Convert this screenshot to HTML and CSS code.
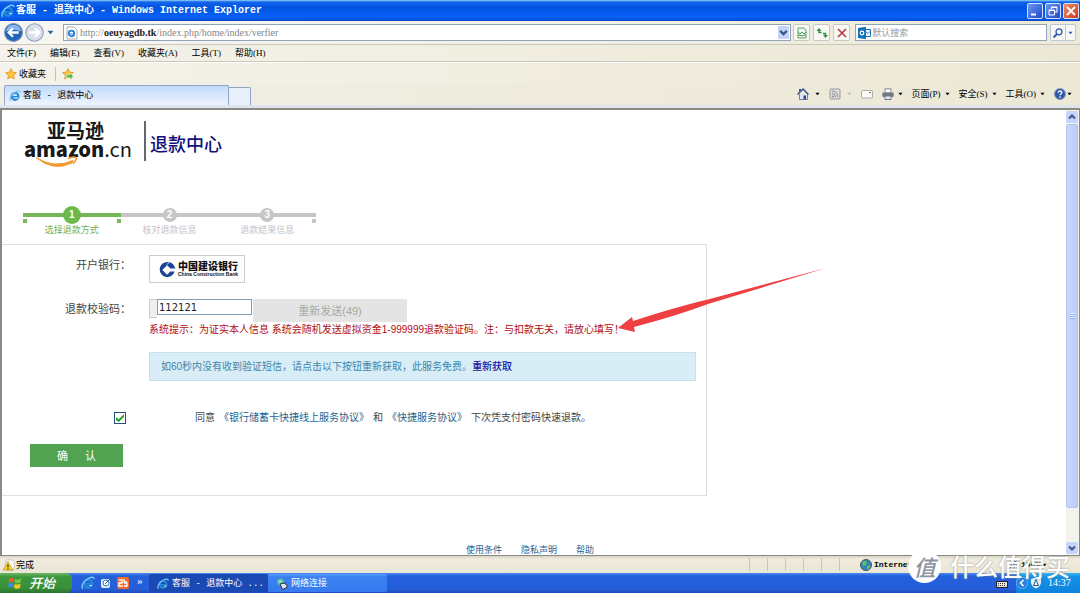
FILE: index.html
```
<!DOCTYPE html>
<html lang="zh-CN">
<head>
<meta charset="utf-8">
<title>客服 - 退款中心</title>
<link rel="stylesheet" href="styles.css">
</head>
<body>
<svg class="defs" aria-hidden="true">
  <defs>
    <symbol id="ie" viewBox="0 0 16 16">
      <circle cx="8" cy="8.500" r="4.600" fill="none" stroke="#2588d8" stroke-width="2.800"/>
      <path d="M4 9h8.500" stroke="#2588d8" stroke-width="2"/>
      <path d="M13 10.200h-3.200l-1 1h3.700z" fill="#fff"/>
      <path d="M2 14.500C-.5 12 3 5.500 8 3c4-2.200 7-2.200 6.800.6" fill="none" stroke="#7cc6f6" stroke-width="1.600"/>
    </symbol>
    <symbol id="star" viewBox="0 0 14 14">
      <path d="M7 .8l1.900 4 4.400.6-3.200 3 .8 4.400L7 10.700l-3.900 2.100.8-4.400-3.200-3 4.400-.6z" fill="#fdc63a" stroke="#d98a14" stroke-width=".8"/>
    </symbol>
    <symbol id="down" viewBox="0 0 6 4"><path d="M.5.500h5L3 3.500z" fill="currentColor"/></symbol>
    <symbol id="chev" viewBox="0 0 10 10"><path d="M2 3.500l3 3 3-3" fill="none" stroke="#3d5487" stroke-width="2"/></symbol>
  </defs>
</svg>

<header class="titlebar">
  <svg class="i14"><use href="#ie"/></svg>
  <h1 class="title">客服 - 退款中心 - Windows Internet Explorer</h1>
  <div class="winbtns">
    <button class="winbtn" aria-label="最小化"><svg viewBox="0 0 14 14"><path d="M3 10.500h5" stroke="#fff" stroke-width="2"/></svg></button>
    <button class="winbtn" aria-label="还原"><svg viewBox="0 0 14 14"><path d="M5.500 5V3h5.500v5H9M3 6h5.500v5H3zM3 6.500h5.500M5.500 3.500H11" fill="none" stroke="#fff"/></svg></button>
    <button class="winbtn close" aria-label="关闭"><svg viewBox="0 0 14 14"><path d="M3 3l8 8M11 3l-8 8" stroke="#fff" stroke-width="1.800"/></svg></button>
  </div>
</header>

<div class="address">
  <button class="nav" aria-label="后退"><svg viewBox="0 0 18 18"><circle cx="9" cy="9" r="8.500" fill="#2264b8" stroke="#7c93b5"/><path d="M2 8a7 6.500 0 0 1 14 0q-7-3-14 0" fill="#86b6ea"/><path d="M14 9H5M8.500 5L4.500 9l4 4" fill="none" stroke="#fff" stroke-width="2.200"/></svg></button>
  <button class="nav" aria-label="前进"><svg viewBox="0 0 18 18"><circle cx="9" cy="9" r="8.300" fill="#d9dfe9" stroke="#8b9bb5"/><path d="M4 9h9M9.500 5l4 4-4 4" fill="none" stroke="#fff" stroke-width="2.200"/></svg></button>
  <button class="plain blue" aria-label="历史"><svg class="arrow"><use href="#down"/></svg></button>
  <div class="urlbox">
    <svg class="i14" viewBox="0 0 14 14"><path d="M2 1h7l3 3v9H2z" fill="#fff" stroke="#999" stroke-width=".8"/><circle cx="6.500" cy="7.500" r="2.800" fill="none" stroke="#2a7fd0" stroke-width="1.800"/><path d="M4 8h5" stroke="#2a7fd0"/></svg>
    <span class="url">http://<b>oeuyagdb.tk</b>/index.php/home/index/verfier</span>
    <button class="drop" aria-label="展开"><svg viewBox="0 0 10 10"><use href="#chev"/></svg></button>
  </div>
  <button class="tool" aria-label="兼容性视图"><svg viewBox="0 0 12 12"><path d="M2 1h6l2 2v8H2z" fill="#eef8ee" stroke="#61a068"/><path d="M2 5l2 2 2-2 2 2 2-2M2 9l2-1 2 1 2-1 2 1" fill="none" stroke="#4c9455"/></svg></button>
  <button class="tool" aria-label="刷新"><svg viewBox="0 0 12 12"><path d="M5.500 5.500H3V3.500M7 6.500h2.500V9" fill="none" stroke="#2f8e3c" stroke-width="1.400"/><path d="M.5 4L3 1l2.500 3zM7 8l2.500 3L12 8z" fill="#2f8e3c"/></svg></button>
  <button class="tool" aria-label="停止"><svg viewBox="0 0 12 12"><path d="M2 2l8 8M10 2l-8 8" stroke="#b8323a" stroke-width="1.500"/></svg></button>
  <label class="search">
    <svg class="i14" viewBox="0 0 14 14"><path d="M8 3.500h5.500v7H8z" fill="#fff" stroke="#1172b8"/><path d="M8 5l3 2.500L13.500 5" fill="none" stroke="#1172b8"/><path d="M1 2l8-1.300v12.600L1 12z" fill="#1172b8"/><circle cx="5" cy="7" r="1.800" fill="none" stroke="#fff" stroke-width="1.200"/></svg>
    <input type="text" placeholder="默认搜索" aria-label="搜索">
  </label>
  <div class="searchbtns">
    <button class="go" aria-label="搜索"><svg viewBox="0 0 12 12"><circle cx="7" cy="4.800" r="3" fill="#eef5ff" stroke="#2e5cab" stroke-width="1.300"/><path d="M5 7l-3.500 3.500" stroke="#2e5cab" stroke-width="1.800"/></svg></button>
    <button class="more" aria-label="搜索选项"><svg class="arrow"><use href="#down"/></svg></button>
  </div>
</div>

<nav class="menubar">
  <button>文件(F)</button><button>编辑(E)</button><button>查看(V)</button><button>收藏夹(A)</button><button>工具(T)</button><button>帮助(H)</button>
</nav>

<div class="favbar">
  <button class="fav"><svg class="i12"><use href="#star"/></svg>收藏夹</button>
  <button class="addfav" aria-label="添加到收藏夹栏"><svg class="i12" viewBox="0 0 14 14"><use href="#star"/><path d="M5 8h4V6l4.500 3.500L9 13v-2H5z" fill="#4db848" stroke="#fff" stroke-width=".6"/></svg></button>
</div>

<div class="tabrow">
  <div class="tabs">
    <button class="tab"><svg class="i12"><use href="#ie"/></svg>客服 - 退款中心</button>
    <button class="newtab" aria-label="新选项卡"></button>
  </div>
  <div class="commands">
    <button class="cmd" aria-label="主页"><svg class="i12" viewBox="0 0 12 12"><path d="M2.500 6v5.500h8V6" fill="#dbe7f5" stroke="#6f86ab"/><path d="M.5 6.500L6 1l5.500 5.500" fill="none" stroke="#41598d" stroke-width="1.500"/><path d="M2 1h2v3H2z" fill="#41598d"/><path d="M6.500 7.500H9v4H6.500z" fill="#324a80"/></svg><svg class="arrow"><use href="#down"/></svg></button>
    <button class="cmd off" aria-label="源"><svg class="i12" viewBox="0 0 12 12"><rect x="1" y="1" width="10" height="10" rx="1" fill="#ddd" stroke="#999"/><path d="M3 5.500a3.500 3.500 0 0 1 3.500 3.500M3 3a6 6 0 0 1 6 6" fill="none" stroke="#888"/><circle cx="3.800" cy="8.500" r="1" fill="#888"/></svg><svg class="arrow"><use href="#down"/></svg></button>
    <button class="cmd" aria-label="阅读邮件"><svg class="i12" viewBox="0 0 12 12"><rect x=".5" y="2.500" width="11" height="7.500" rx="1" fill="#fbfbf8" stroke="#aaa"/><path d="M8 4.500h2" stroke="#b55"/></svg></button>
    <button class="cmd" aria-label="打印"><svg class="i12" viewBox="0 0 12 12"><path d="M3 .8h6V5H3z" fill="#fff" stroke="#889"/><rect x=".3" y="4.500" width="11.400" height="4.500" rx="1" fill="#727780"/><path d="M3 8h6v3.500H3z" fill="#dce8fa" stroke="#778"/></svg><svg class="arrow"><use href="#down"/></svg></button>
    <button class="cmd">页面(P)<svg class="arrow"><use href="#down"/></svg></button>
    <button class="cmd">安全(S)<svg class="arrow"><use href="#down"/></svg></button>
    <button class="cmd">工具(O)<svg class="arrow"><use href="#down"/></svg></button>
    <button class="cmd help" aria-label="帮助"><svg class="i12" viewBox="0 0 12 12"><circle cx="6" cy="6" r="5.500" fill="#2e58a8" stroke="#8b9cc0"/><path d="M4.200 4.800C4.200 2.400 8 2.500 7.900 4.600 7.800 5.800 6 5.800 6 7.300M6 8.300v1.400" fill="none" stroke="#fff" stroke-width="1.300"/></svg><svg class="arrow"><use href="#down"/></svg></button>
  </div>
</div>

<div class="viewport">
  <main class="page">
    <div class="brand">
      <div class="logo">
        <span class="logo-cn">亚马逊</span>
        <span class="logo-en"><b>amazon</b>.cn</span>
        <svg class="smile" viewBox="0 0 44 11"><path d="M1 1.500Q19 13 38 4.500L37 7q-19 9-36-5.500z" fill="#f19a2e" stroke="#f19a2e"/><path d="M33 2.500q7-2.500 8-.8t-3 6" fill="none" stroke="#f19a2e" stroke-width="1.600"/></svg>
      </div>
      <h2 class="center">退款中心</h2>
    </div>

    <ol class="steps">
      <li class="step active"><span class="num">1</span><span class="name">选择退款方式</span></li>
      <li class="step"><span class="num">2</span><span class="name">核对退款信息</span></li>
      <li class="step"><span class="num">3</span><span class="name">退款结果信息</span></li>
    </ol>

    <form class="panel">
      <div class="row bankrow">
        <span class="label">开户银行：</span>
        <div class="bank">
          <svg class="ccb" viewBox="0 0 18 18"><path d="M9 1a8 8 0 1 0 7.500 10H12l-3.500 3.500-5-5 5-5L12 8h5.500L15 3.500Q13 1 9 1z" fill="#1a4597"/><path d="M8 4l3-2.500" stroke="#fff" stroke-width=".8"/><path d="M8.500 7L11 9.500 8.500 12 6 9.500z" fill="#fff"/></svg>
          <span class="bankname"><b>中国建设银行</b><small>China Construction Bank</small></span>
        </div>
      </div>
      <div class="row coderow">
        <label class="label" for="code">退款校验码：</label>
        <div>
          <div class="codeline">
            <span class="addon"></span>
            <input class="code" id="code" type="text" value="112121">
            <button class="resend" type="button" disabled>重新发送(49)</button>
          </div>
          <p class="hint">系统提示：为证实本人信息 系统会随机发送虚拟资金1-999999退款验证码。注：与扣款无关，请放心填写！</p>
        </div>
      </div>
      <p class="alert">如60秒内没有收到验证短信，请点击以下按钮重新获取，此服务免费。<a href="#">重新获取</a></p>
      <div class="agree">
        <input type="checkbox" id="agree" class="check" checked>
        <label for="agree">同意<a href="#">《银行储蓄卡快捷线上服务协议》</a>和<a href="#">《快捷服务协议》</a>下次凭支付密码快速退款。</label>
      </div>
      <button class="submit" type="button"><span>确</span><span>认</span></button>
    </form>

    <footer class="links"><a href="#">使用条件</a><a href="#">隐私声明</a><a href="#">帮助</a></footer>

    <svg class="pointer" viewBox="0 0 210 64"><path d="M2 60L16 49l1 4Q60 39 90 32L210 0 92 36Q60 48 18 59l1 5z" fill="#ee4040"/></svg>
  </main>
  <div class="scroll">
    <button class="sbtn" aria-label="向上滚动"><svg class="flip" viewBox="0 0 10 10"><use href="#chev"/></svg></button>
    <div class="thumb"><i></i></div>
    <div class="track"></div>
    <button class="sbtn" aria-label="向下滚动"><svg viewBox="0 0 10 10"><use href="#chev"/></svg></button>
  </div>
</div>

<div class="status">
  <svg class="i12" viewBox="0 0 12 12"><path d="M3 1h7l1 1v9H3z" fill="#fff" stroke="#aaa" stroke-width=".6"/><path d="M5 2.500l5 8.500H.3z" fill="#fbd535" stroke="#a88300" stroke-width=".6"/><path d="M5 5.500v3M5 9.300v1" stroke="#000"/></svg>
  <span class="done">完成</span>
  <i class="cell"></i><i class="cell"></i><i class="cell"></i><i class="cell"></i><i class="cell"></i><i class="cell"></i>
  <div class="zone"><svg class="i12" viewBox="0 0 12 12"><circle cx="6" cy="6" r="5.500" fill="#3183b9" stroke="#456"/><path d="M2 3q3-2 5 0L6 6 3 7zM7 7l3-1v3L7 11z" fill="#62bd68"/></svg>Internet</div>
  <div class="zoom"><svg class="i12" viewBox="0 0 12 12"><circle cx="7" cy="5" r="3" fill="#e8f2ff" stroke="#456aa8"/><path d="M5 7l-4 4M5.500 5h3M7 3.500v3" stroke="#456aa8"/></svg>100%<svg class="arrow"><use href="#down"/></svg></div>
</div>

<div class="taskbar">
  <button class="start"><svg class="i14" viewBox="0 0 14 14"><path d="M1 3q3-2 5-.5L5.500 6.500Q3.500 5 .5 6.500z" fill="#f0592a"/><path d="M7 3q3 1.500 6-.5L12.500 6.500q-3 1.500-6 .3z" fill="#80c342"/><path d="M.5 7.500q3-1.500 5 0L5 11.500q-2-1.500-5 0z" fill="#3b8de8"/><path d="M6.500 8q3 1.200 6-.3L12 12q-3 1.500-6-.3z" fill="#fbc81e"/></svg>开始</button>
  <div class="quick">
    <svg class="i14"><use href="#ie"/></svg>
    <svg class="i12" viewBox="0 0 12 12"><rect x="1" y="2" width="9" height="9" rx="2" fill="#e3eefa"/><circle cx="6" cy="6" r="3" fill="#fff" stroke="#2a7cc5"/><path d="M5 7l6-6" stroke="#3a5f91"/></svg>
    <svg class="i12" viewBox="0 0 12 12"><rect width="12" height="12" rx="2" fill="#f26b2b"/><path d="M2 3h3v3H2v3h4M7 2v3h3M7 6h3v3H7" fill="none" stroke="#fff" stroke-width="1.300"/></svg>
    <span class="raquo">»</span>
  </div>
  <button class="task on"><svg class="i12"><use href="#ie"/></svg>客服 - 退款中心 ...</button>
  <button class="task"><svg class="i12" viewBox="0 0 12 12"><circle cx="4.500" cy="4" r="3.500" fill="#51bdb1"/><path d="M4 6l5-1 2.500 4-5 2.500z" fill="#dde8ef" stroke="#334"/><path d="M2 3l3-1 1 2-2 1z" fill="#a5e8a0"/></svg>网络连接</button>
  <svg class="kbd" viewBox="0 0 12 10"><rect x=".5" y="3.500" width="11" height="6" fill="#ece9dc" stroke="#222"/><path d="M2 5.500h8M2 7.500h8" stroke="#333" stroke-dasharray="1 1"/></svg>
  <div class="tray">
    <svg class="i12" viewBox="0 0 12 12"><circle cx="6" cy="6" r="5.800" fill="#2d83df" stroke="#8dc2f5" stroke-width=".6"/><path d="M7.500 3l-3 3 3 3" fill="none" stroke="#fff" stroke-width="1.500"/></svg>
    <svg class="i12" viewBox="0 0 12 12"><path d="M1 2l5-1.500L11 2v4q-1 4-5 5.500Q2 10 1 6z" fill="#e7f0f6"/><path d="M6 2.500l2.500 6h-5z" fill="none" stroke="#2a587b"/></svg>
    <time>14:37</time>
  </div>
</div>

<div class="watermark"><span class="seal">值</span><span>什么值得买</span></div>
</body>
</html>
```
FILE: styles.css
```
* { box-sizing: border-box; }
html, body { height: 100%; }
body {
  margin: 0;
  display: flex;
  flex-direction: column;
  position: relative;
  overflow: hidden;
  background: #ece9d8;
  color: #000;
  font: 9px/14px "Liberation Serif", "Noto Sans CJK SC", sans-serif;
}
button, input { font: inherit; color: inherit; margin: 0; padding: 0; border: 0; background: none; }
button { display: flex; align-items: center; white-space: nowrap; }
svg { display: block; flex: none; }
a { text-decoration: none; color: #1c638f; }
p, h1, h2, ol { margin: 0; padding: 0; }
.defs { position: absolute; width: 0; height: 0; }
.i14 { width: 14px; height: 14px; }
.i12 { width: 12px; height: 12px; }
.arrow { width: 5px; height: 4px; }

.titlebar {
  flex: none;
  display: flex;
  align-items: center;
  height: 21px;
  padding: 0 1px;
  background: linear-gradient(#8fd3f8 0, #1464ea 2px, #0053e1 8px, #0862f6 17px, #0447cc);
}
.title {
  flex: 1;
  margin-left: 1px;
  color: #fff;
  font: bold 10px/16px "Liberation Mono", "Noto Sans CJK SC", monospace;
}
.winbtns { display: flex; gap: 2px; }
.winbtn { width: 16px; height: 16px; border: 1px solid #d5e2fb; border-radius: 2px; background: linear-gradient(135deg, #6d96ef, #1c49cf); }
.winbtn.close { background: linear-gradient(135deg, #f08d6c, #cc3a17); }

.address {
  flex: none;
  display: flex;
  align-items: center;
  height: 24px;
  padding: 0 4px;
  background: linear-gradient(90deg, #f7f6f2, #edeada);
  border-bottom: 1px solid #cbc8b8;
}
.nav { width: 20px; }
.nav + .nav { margin-left: 1px; }
.nav svg { width: 19px; height: 19px; }
.blue { color: #2b6494; margin: 0 9px 0 2px; }
.blue .arrow { width: 7px; height: 5px; }
.urlbox, .search { display: flex; align-items: center; height: 17px; background: #fff; border: 1px solid #92a5b8; }
.urlbox { flex: 730; padding-left: 1px; }
.url { flex: 1; margin-left: 1px; color: #858585; font-size: 10px; }
.url b { color: #222; }
.drop { width: 11px; height: 13px; margin-right: 1px; background: #c3d3fb; border-radius: 1px; }
.tool { justify-content: center; width: 17px; height: 17px; margin-left: 3px; border: 1px solid #c9c9c0; border-radius: 2px; background: #f9f8f4; }
.urlbox + .tool { margin-left: 2px; }
.tool svg { width: 12px; height: 12px; }
.search { flex: 190; margin-left: 5px; padding-left: 1px; }
.search input { flex: 1; min-width: 0; margin-left: 1px; outline: 0; }
.search input::placeholder { color: #999; opacity: 1; }
.searchbtns { display: flex; width: 26px; height: 17px; margin-left: 3px; border: 1px solid #bcc6d4; border-radius: 2px; background: #f9f8f4; }
.go { width: 15px; justify-content: center; border-right: 1px solid #bcc6d4; }
.go svg { width: 12px; height: 12px; }
.more { flex: 1; justify-content: center; color: #2e5cab; }

.menubar {
  flex: none;
  display: flex;
  align-items: center;
  gap: 14px;
  height: 17px;
  padding-left: 7px;
  background: linear-gradient(90deg, #f4f2ea, #ece8d6);
  border-bottom: 1px solid #cbc8b8;
}
.favbar {
  flex: none;
  display: flex;
  align-items: center;
  height: 23px;
  padding: 0 5px;
  border-top: 1px solid #fff;
  background: linear-gradient(90deg, #f4f2ea, #ece8d6);
}
.fav { gap: 2px; padding-right: 9px; border-right: 1px solid #c5c2b2; }
.addfav { margin-left: 6px; }

.tabrow {
  flex: none;
  display: flex;
  align-items: flex-end;
  justify-content: space-between;
  height: 23px;
  background: linear-gradient(90deg, #f1efe6, #ece8d6);
  border-bottom: 3px solid #dfe4ee;
}
.tabs { display: flex; align-items: flex-end; padding-left: 4px; }
.tab {
  width: 225px;
  height: 20px;
  gap: 2px;
  padding-left: 4px;
  border: 1px solid #91a7c4;
  border-bottom: 0;
  border-radius: 2px 2px 0 0;
  background: linear-gradient(#c2daf9, #eef4fe);
  font-family: "Liberation Mono", "Noto Sans CJK SC", monospace;
}
.newtab { width: 22px; height: 18px; border: 1px solid #91a7c4; border-left: 0; border-bottom: 0; border-radius: 0 2px 0 0; background: #e7effb; }
.commands { display: flex; align-items: center; gap: 9px; height: 20px; padding: 0 8px 3px 0; }
.cmd { gap: 4px; }
.cmd:nth-child(1), .cmd:nth-child(2) { gap: 6px; }
.off .arrow { color: #bbb; }
.help { gap: 1px; }

.viewport { flex: 1; min-height: 0; display: flex; border: 2px solid #898b83; border-width: 2px 1px 1px 2px; background: #fff; }
.page { flex: 1; min-width: 0; position: relative; overflow: hidden; font: 10px/14px "Liberation Sans", "Noto Sans CJK SC", sans-serif; color: #444; }

.brand { display: flex; align-items: flex-start; gap: 15px; padding: 11px 0 0 22px; }
.logo { display: flex; flex-direction: column; width: 105px; height: 50px; color: #181818; }
.logo-cn { padding-left: 23px; font: bold 19px/18px "Noto Sans CJK SC", sans-serif; }
.logo-en { font: 20px/20px "Noto Sans CJK SC", sans-serif; }
.logo-en b { font-weight: 900; }
.smile { width: 44px; height: 11px; margin: -3px 0 0 11px; }
.center { height: 40px; padding-left: 4px; border-left: 2px solid #66666f; color: #10107a; font: 500 18px/44px "Noto Sans CJK SC", sans-serif; }

.steps { display: flex; width: 293px; margin: 35px 0 0 21px; list-style: none; }
.step {
  flex: 1;
  display: flex;
  flex-direction: column;
  align-items: center;
  height: 38px;
  background: linear-gradient(#c6c6c6, #c6c6c6) 0 7px / 100% 4px no-repeat;
  color: #c4c4c4;
}
.step:last-child { background: linear-gradient(#c6c6c6, #c6c6c6) 0 7px / 100% 4px no-repeat, linear-gradient(#c6c6c6, #c6c6c6) 100% 13px / 4px 4px no-repeat; }
.step.active {
  background: linear-gradient(#76b657, #76b657) 0 7px / 100% 4px no-repeat, linear-gradient(#76b657, #76b657) 0 13px / 4px 4px no-repeat, linear-gradient(#76b657, #76b657) 100% 13px / 4px 4px no-repeat;
  color: #6cb04c;
}
.num { width: 14px; height: 14px; margin: 2px 0; border-radius: 50%; background: #c6c6c6; color: #fff; text-align: center; font-weight: bold; }
.active .num { width: 18px; height: 18px; margin: 0; background: #6dba4b; line-height: 18px; }
.name { font-size: 9px; line-height: 12px; }

.panel { display: flex; flex-direction: column; width: 100%; max-width: 705px; padding: 10px 10px 28px 0; border: 1px solid #dedede; border-left: 0; }
.row { display: grid; grid-template-columns: 129px 1fr; column-gap: 18px; }
.label { text-align: right; font-size: 11px; line-height: 20px; }
.bank { display: flex; align-items: center; gap: 2px; width: 96px; height: 28px; padding-left: 9px; border: 1px solid #ccc; }
.ccb { width: 17px; height: 17px; }
.bankname { display: flex; flex-direction: column; color: #111; }
.bankname b { font: 900 10px/10px "Noto Sans CJK SC", sans-serif; }
.bankname small { font-size: 5px; line-height: 6px; font-weight: bold; white-space: nowrap; }
.coderow { margin-top: 16px; }
.codeline { display: flex; align-items: flex-start; }
.addon { width: 8px; height: 19px; border: 1px solid #ccc; border-right: 0; background: #eee; }
.code { width: 95px; height: 16px; padding-left: 1px; border: 1px solid #7f9db9; background: #fff; color: #222; font: 10px/14px "DejaVu Sans", sans-serif; }
.resend { justify-content: center; width: 154px; height: 23px; margin-left: 1px; background: #e4e4e4; color: #a9a9a0; font-size: 11px; }
.hint { padding-top: 1px; color: #b00d12; white-space: nowrap; }
.alert { margin: 15px 0 0 147px; padding: 7px 11px; border: 1px solid #c3e2ec; background: #d9edf7; line-height: 13px; color: #3a87ad; }
.alert a { color: #1414a4; font-weight: 500; }
.agree { display: flex; align-items: center; gap: 69px; margin-top: 29px; padding-left: 112px; line-height: 16px; }
.agree a { padding: 0 4px; }
.check { appearance: none; display: grid; place-items: center; width: 12px; height: 12px; border: 1px solid #1c5180; background: #fff; }
.check:checked::after { content: ""; width: 8px; height: 8px; background: #21a121; clip-path: polygon(0 40%, 35% 65%, 100% 0, 100% 35%, 35% 100%, 0 75%); }
.submit { justify-content: center; gap: 17px; width: 93px; height: 23px; margin: 18px 0 0 28px; background: #51a351; color: #fff; font-size: 11px; }
.links { display: flex; gap: 19px; margin: 47px 0 0 464px; font-size: 9px; }
.pointer { position: absolute; left: 614px; top: 158px; width: 210px; height: 64px; }

.scroll { flex: none; display: flex; flex-direction: column; width: 13px; padding: 1px 0; gap: 1px; background: #f3f3ee; }
.sbtn { flex: none; width: 12px; height: 12px; border-radius: 2px; background: #c6d5fb; }
.sbtn svg { width: 10px; height: 10px; margin: auto; }
.flip { transform: rotate(180deg); }
.thumb { flex: 12; display: grid; place-items: center; width: 12px; border: 1px solid #b2c5f2; border-radius: 2px; background: linear-gradient(90deg, #c9d7fc, #bccdf9); }
.thumb i { width: 5px; height: 6px; background: repeating-linear-gradient(#eef4ff 0 1px, #8cb0f8 1px 2px); }
.track { flex: 1; }

.status { flex: none; display: flex; align-items: center; height: 17px; padding: 0 3px; background: linear-gradient(#d6d3c2, #efecdf 3px, #e9e6d5); }
.done { flex: 1; margin-left: 1px; }
.cell { width: 18px; height: 13px; border-left: 1px solid #c9c6b4; }
.zone, .zoom { display: flex; align-items: center; gap: 2px; font: bold 8px/12px "Liberation Mono", monospace; }
.zone { width: 150px; padding-left: 3px; }
.zoom { width: 70px; }

.taskbar { flex: none; display: flex; align-items: center; height: 20px; background: linear-gradient(#4a8af2 0, #2560dc 3px, #245edb 16px, #1c4bb5); color: #fff; }
.start { width: 72px; height: 20px; gap: 7px; padding-left: 8px; border-radius: 0 6px 6px 0; background: linear-gradient(#6bb566 0, #3c963c 4px, #389138 15px, #2b722d); font: italic 500 13px/18px "Noto Sans CJK SC", sans-serif; }
.quick { display: flex; align-items: center; gap: 5px; width: 77px; padding-left: 9px; }
.raquo { align-self: flex-start; font-size: 11px; line-height: 8px; padding-left: 3px; }
.task { width: 119px; height: 18px; gap: 3px; padding: 2px 0 0 8px; border-radius: 2px; background: linear-gradient(#5c9bff, #3b7ff1 3px, #377af0); font-family: "Liberation Mono", "Noto Sans CJK SC", monospace; }
.task.on { background: #1b49b3; }
.kbd { width: 12px; height: 10px; margin: 0 8px 0 auto; }
.tray { display: flex; align-items: center; gap: 2px; width: 64px; height: 20px; background: linear-gradient(#37b4f5, #1290e8 4px, #0f83dd); }
.tray time { margin-left: 4px; font-size: 10px; }

.watermark {
  position: absolute;
  right: 10px;
  bottom: 10px;
  display: flex;
  align-items: center;
  gap: 9px;
  color: #fff;
  font: 500 24px/34px "Noto Sans CJK SC", sans-serif;
  text-shadow: 0 0 2px #8a8a8a;
}
.seal { width: 33px; height: 33px; border-radius: 50%; background: #fff; color: #8d939e; text-align: center; font-size: 22px; font-style: italic; line-height: 32px; text-shadow: none; }
```
